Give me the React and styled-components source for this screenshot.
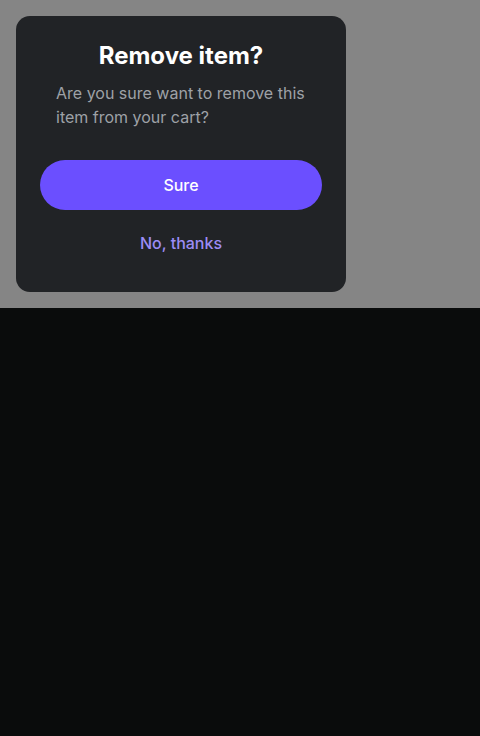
import React from "react";
import styled, { createGlobalStyle } from "styled-components";

const Global = createGlobalStyle`
  html, body { margin: 0; padding: 0; background: #0a0c0c; }
  body { font-family: Inter, "Noto Sans", sans-serif; -webkit-font-smoothing: antialiased; }
  #root { min-height: 736px; background: #0a0c0c; }
`;

const Overlay = styled.div`
  background: #858585;
  padding: 16px;
  display: flex;
  align-items: flex-start;
`;

const Dialog = styled.div`
  width: 330px;
  box-sizing: border-box;
  background: #212326;
  border-radius: 14px;
  padding: 24px;
  display: flex;
  flex-direction: column;
`;

const Title = styled.h2`
  margin: 0;
  text-align: center;
  font-size: 24px;
  line-height: 32px;
  font-weight: 700;
  color: #ffffff;
`;

const Message = styled.p`
  margin: 9px 16px 0;
  font-size: 16px;
  line-height: 24px;
  font-weight: 400;
  color: #9ea1a6;
`;

const Actions = styled.div`
  margin-top: 31px;
  display: flex;
  flex-direction: column;
  gap: 8px;
`;

const ActionButton = styled.button`
  height: 50px;
  border: none;
  border-radius: 25px;
  font-family: inherit;
  font-size: 16px;
  font-weight: 500;
  cursor: pointer;
  background: ${(p) => (p.$primary ? "#6b4fff" : "transparent")};
  color: ${(p) => (p.$primary ? "#ffffff" : "#9c8cf5")};
`;

export default function App() {
  return (
    <>
      <Global />
      <Overlay>
        <Dialog>
          <Title>Remove item?</Title>
          <Message>Are you sure want to remove this item from your cart?</Message>
          <Actions>
            <ActionButton $primary>Sure</ActionButton>
            <ActionButton>No, thanks</ActionButton>
          </Actions>
        </Dialog>
      </Overlay>
    </>
  );
}
